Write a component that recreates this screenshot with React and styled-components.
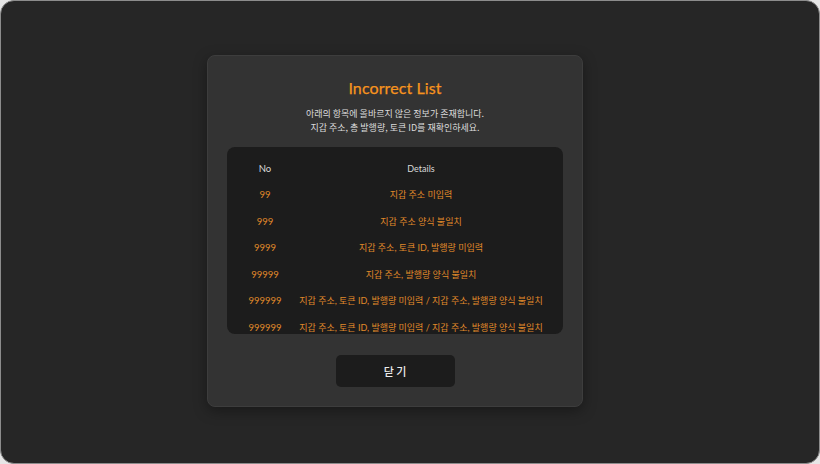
import React from 'react';
import styled, { createGlobalStyle } from 'styled-components';

const GlobalStyle = createGlobalStyle`
  html, body {
    margin: 0;
    padding: 0;
    background: #e6e6e6;
  }
  * {
    box-sizing: border-box;
  }
`;

const rows = [
  { no: '99', details: '지갑 주소 미입력' },
  { no: '999', details: '지갑 주소 양식 불일치' },
  { no: '9999', details: '지갑 주소, 토큰 ID, 발행량 미입력' },
  { no: '99999', details: '지갑 주소, 발행량 양식 불일치' },
  { no: '999999', details: '지갑 주소, 토큰 ID, 발행량 미입력 / 지갑 주소, 발행량 양식 불일치' },
  { no: '999999', details: '지갑 주소, 토큰 ID, 발행량 미입력 / 지갑 주소, 발행량 양식 불일치' },
];

const App = () => {
  return (
    <>
      <GlobalStyle />
      <Frame>
        <Modal>
          <Title>Incorrect List</Title>
          <Message>
            아래의 항목에 올바르지 않은 정보가 존재합니다.
            <br />
            지갑 주소, 총 발행량, 토큰 ID를 재확인하세요.
          </Message>
          <TableBox>
            <Row $head>
              <NoCell>No</NoCell>
              <DetailCell>Details</DetailCell>
            </Row>
            {rows.map((r, i) => (
              <Row key={i}>
                <NoCell>{r.no}</NoCell>
                <DetailCell>{r.details}</DetailCell>
              </Row>
            ))}
          </TableBox>
          <CloseButton>닫 기</CloseButton>
        </Modal>
      </Frame>
    </>
  );
};

const Frame = styled.div`
  width: 820px;
  height: 464px;
  background: #262626;
  border: 1px solid #8c8c8c;
  border-radius: 14px;
  display: flex;
  justify-content: center;
  align-items: flex-start;
  padding: 54px 30px 0 0;
  font-family: "Lato", "Noto Sans CJK KR", sans-serif;
`;

const Modal = styled.div`
  width: 376px;
  height: 352px;
  background: #333333;
  border: 1px solid #3d3d3d;
  border-radius: 8px;
  box-shadow: 0 4px 14px rgba(0, 0, 0, 0.35);
  display: flex;
  flex-direction: column;
  align-items: center;
  padding: 20px 20px 0;
`;

const Title = styled.h1`
  margin: 0;
  font-size: 16px;
  font-weight: 400;
  line-height: 24px;
  color: #f7931e;
  letter-spacing: 0.1px;
  -webkit-text-stroke: 0.25px #f7931e;
`;

const Message = styled.p`
  margin: 7px 0 0;
  font-size: 9px;
  line-height: 14px;
  color: #dcdcdc;
  text-align: center;
  font-family: "Noto Sans CJK KR", sans-serif;
`;

const TableBox = styled.div`
  margin-top: 12px;
  width: 336px;
  height: 187px;
  background: #1c1c1c;
  border-radius: 8px;
  padding: 8px 12px 0;
  overflow: hidden;
`;

const Row = styled.div`
  display: flex;
  align-items: center;
  height: 26.5px;
  font-size: 9px;
  color: ${(p) => (p.$head ? '#d8d8d8' : '#e08a2a')};
  white-space: nowrap;
`;

const NoCell = styled.div`
  width: 52px;
  text-align: center;
  font-size: 9.5px;
`;

const DetailCell = styled.div`
  flex: 1;
  text-align: center;
`;

const CloseButton = styled.button`
  margin-top: 21px;
  width: 119px;
  height: 32px;
  border: none;
  border-radius: 5px;
  background: #1c1c1c;
  color: #ececec;
  font-size: 11px;
  font-weight: 500;
  font-family: "Noto Sans CJK KR", sans-serif;
  cursor: pointer;
`;

export default App;
